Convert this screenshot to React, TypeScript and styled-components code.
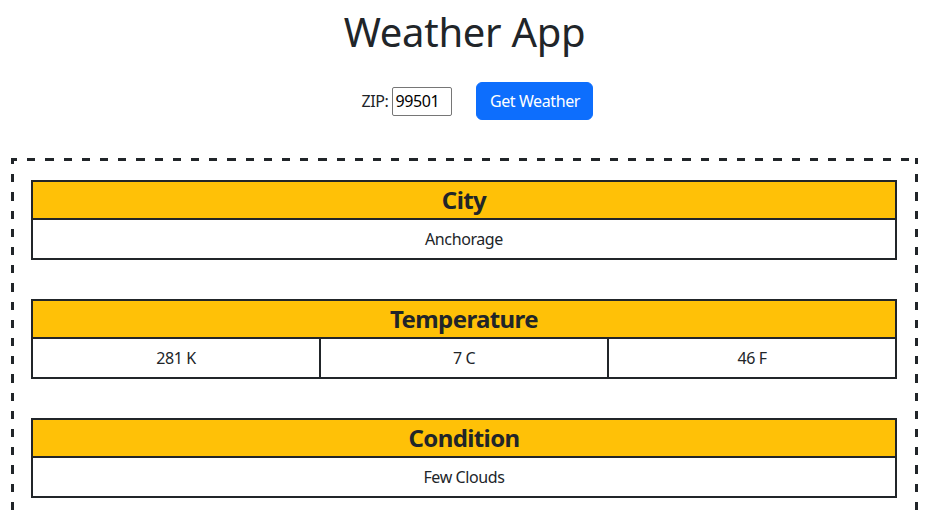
import React from "react";
import styled, { createGlobalStyle } from "styled-components";

const GlobalStyle = createGlobalStyle`
  html, body { margin: 0; padding: 0; background: #fff; }
  body {
    font-family: "Noto Sans", "Open Sans", sans-serif;
    color: #212529;
    font-size: 16px;
    line-height: 1.5;
    letter-spacing: -0.4px;
  }
`;

const Page = styled.div`
  padding: 8px 11px 0;
  text-align: center;
`;

const Title = styled.h1`
  margin: 0 0 26px;
  font-size: 40px;
  font-weight: 400;
  line-height: 48px;
  letter-spacing: -0.3px;
`;

const Form = styled.form`
  display: flex;
  justify-content: center;
  align-items: center;
  padding-left: 26px;
  margin-bottom: 38px;
`;

const Label = styled.label`
  display: flex;
  align-items: center;
  gap: 4px;
  font-size: 16px;
`;

const ZipInput = styled.input`
  box-sizing: border-box;
  width: 60px;
  height: 29px;
  padding: 1px 2px;
  border: 1px solid #767676;
  border-radius: 2px;
  font-family: inherit;
  font-size: 16px;
  letter-spacing: -0.4px;
  color: #000;
`;

const Button = styled.button`
  margin-left: 24px;
  height: 38px;
  width: 117px;
  padding: 6px 12px;
  border: 1px solid #0d6efd;
  border-radius: 6px;
  background: #0d6efd;
  color: #fff;
  font-family: inherit;
  font-size: 16px;
  line-height: 24px;
  letter-spacing: -0.4px;
  cursor: pointer;
`;

const dashH = "repeating-linear-gradient(90deg, #212529 0 6.2px, transparent 6.2px 16.2px, #212529 16.2px 18.2px)";
const dashV = "repeating-linear-gradient(180deg, #212529 0 6.2px, transparent 6.2px 16.2px, #212529 16.2px 18.2px)";

const Results = styled.div`
  padding: 22px 21px 43px 20px;
  background-image: ${dashH}, ${dashH}, ${dashV}, ${dashV};
  background-size: 100% 3px, 100% 3px, 3px 100%, 3px 100%;
  background-position: left top, left bottom, left top, right top;
  background-repeat: no-repeat;
  display: flex;
  flex-direction: column;
  gap: 39px;
`;

const Table = styled.table`
  width: 100%;
  border-collapse: collapse;
  border: 2px solid #212529;
  table-layout: fixed;
  background: #fff;
`;

const Head = styled.th`
  background: #ffc107;
  border: 2px solid #212529;
  padding: 0;
  font-size: 24px;
  font-weight: 700;
  line-height: 36px;
  letter-spacing: -0.6px;
`;

const Cell = styled.td`
  border: 2px solid #212529;
  padding: 7px 8px;
  font-size: 16px;
  line-height: 24px;
  text-align: center;
`;

type Section = { title: string; values: string[] };

const sections: Section[] = [
  { title: "City", values: ["Anchorage"] },
  { title: "Temperature", values: ["281 K", "7 C", "46 F"] },
  { title: "Condition", values: ["Few Clouds"] },
];

export default function App() {
  return (
    <>
      <GlobalStyle />
      <Page>
        <Title>Weather App</Title>
        <Form onSubmit={(e) => e.preventDefault()}>
          <Label>
            ZIP:
            <ZipInput defaultValue="99501" />
          </Label>
          <Button type="submit">Get Weather</Button>
        </Form>
        <Results>
          {sections.map((s) => (
            <Table key={s.title}>
              <thead>
                <tr>
                  <Head colSpan={s.values.length}>{s.title}</Head>
                </tr>
              </thead>
              <tbody>
                <tr>
                  {s.values.map((v) => (
                    <Cell key={v}>{v}</Cell>
                  ))}
                </tr>
              </tbody>
            </Table>
          ))}
        </Results>
      </Page>
    </>
  );
}
